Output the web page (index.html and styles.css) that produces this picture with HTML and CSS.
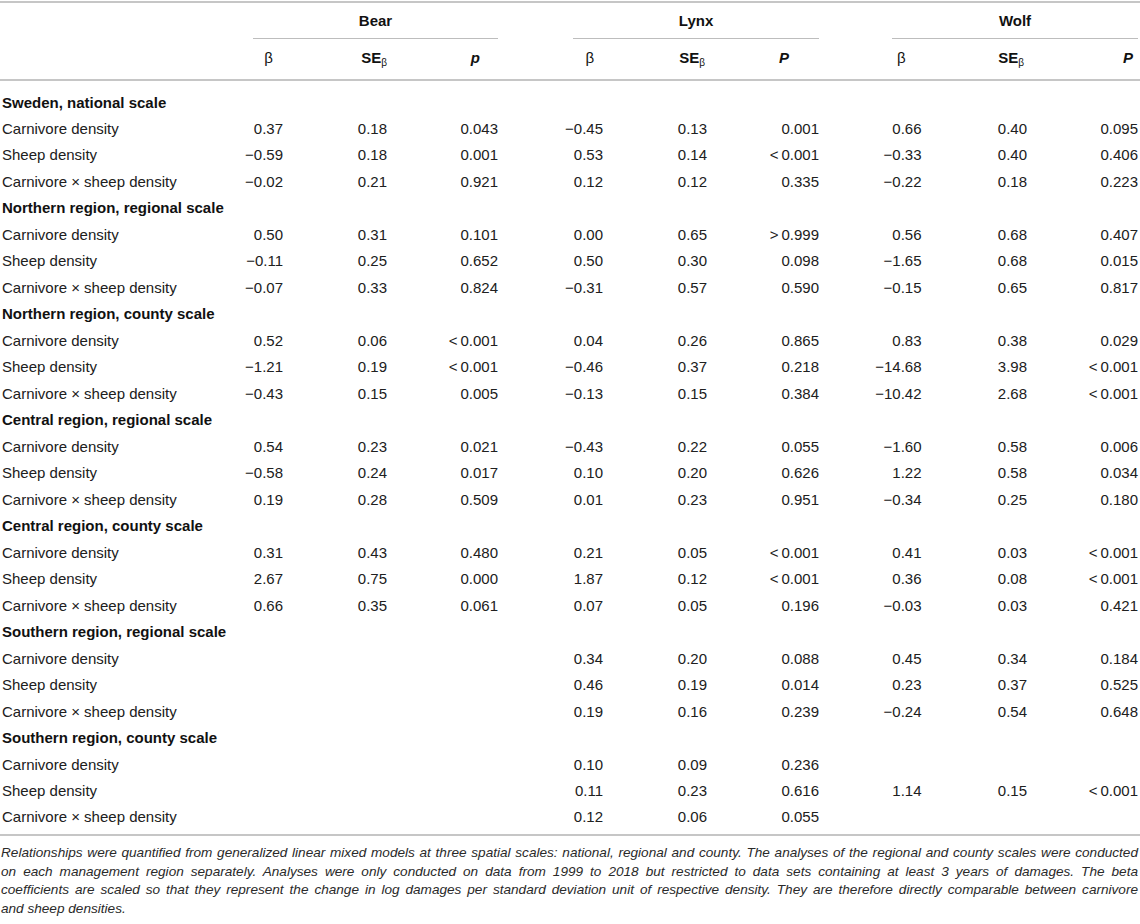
FILE: index.html
```html
<!DOCTYPE html>
<html lang="en">
<head>
<meta charset="utf-8">
<title>Relationships between carnivore and sheep density and damages</title>
<link rel="stylesheet" href="styles.css">
</head>
<body>
<div class="page">
<table class="results">
  <colgroup>
    <col class="c-label">
    <col class="c-bb"><col class="c-bs"><col class="c-bp">
    <col class="c-lb"><col class="c-ls"><col class="c-lp">
    <col class="c-wb"><col class="c-ws"><col class="c-wp">
  </colgroup>
  <thead>
    <tr class="groups">
      <th></th>
      <th colspan="3"><div class="group group-bear">Bear</div></th>
      <th colspan="3"><div class="group group-lynx">Lynx</div></th>
      <th colspan="3"><div class="group group-wolf">Wolf</div></th>
    </tr>
    <tr class="subs">
      <th></th>
      <th class="h-beta h-bear-b">β</th>
      <th class="h-se h-bear-s">SE<sub>β</sub></th>
      <th class="h-p h-bear-p">p</th>
      <th class="h-beta h-lynx-b">β</th>
      <th class="h-se h-lynx-s">SE<sub>β</sub></th>
      <th class="h-p h-lynx-p">P</th>
      <th class="h-beta h-wolf-b">β</th>
      <th class="h-se h-wolf-s">SE<sub>β</sub></th>
      <th class="h-p h-wolf-p">P</th>
    </tr>
  </thead>
  <tbody>
    <tr class="section"><th colspan="10">Sweden, national scale</th></tr>
    <tr><td>Carnivore density</td><td>0.37</td><td>0.18</td><td>0.043</td><td>−0.45</td><td>0.13</td><td>0.001</td><td>0.66</td><td>0.40</td><td>0.095</td></tr>
    <tr><td>Sheep density</td><td>−0.59</td><td>0.18</td><td>0.001</td><td>0.53</td><td>0.14</td><td>&lt;&#8201;0.001</td><td>−0.33</td><td>0.40</td><td>0.406</td></tr>
    <tr><td>Carnivore × sheep density</td><td>−0.02</td><td>0.21</td><td>0.921</td><td>0.12</td><td>0.12</td><td>0.335</td><td>−0.22</td><td>0.18</td><td>0.223</td></tr>

    <tr class="section"><th colspan="10">Northern region, regional scale</th></tr>
    <tr><td>Carnivore density</td><td>0.50</td><td>0.31</td><td>0.101</td><td>0.00</td><td>0.65</td><td>&gt;&#8201;0.999</td><td>0.56</td><td>0.68</td><td>0.407</td></tr>
    <tr><td>Sheep density</td><td>−0.11</td><td>0.25</td><td>0.652</td><td>0.50</td><td>0.30</td><td>0.098</td><td>−1.65</td><td>0.68</td><td>0.015</td></tr>
    <tr><td>Carnivore × sheep density</td><td>−0.07</td><td>0.33</td><td>0.824</td><td>−0.31</td><td>0.57</td><td>0.590</td><td>−0.15</td><td>0.65</td><td>0.817</td></tr>

    <tr class="section"><th colspan="10">Northern region, county scale</th></tr>
    <tr><td>Carnivore density</td><td>0.52</td><td>0.06</td><td>&lt;&#8201;0.001</td><td>0.04</td><td>0.26</td><td>0.865</td><td>0.83</td><td>0.38</td><td>0.029</td></tr>
    <tr><td>Sheep density</td><td>−1.21</td><td>0.19</td><td>&lt;&#8201;0.001</td><td>−0.46</td><td>0.37</td><td>0.218</td><td>−14.68</td><td>3.98</td><td>&lt;&#8201;0.001</td></tr>
    <tr><td>Carnivore × sheep density</td><td>−0.43</td><td>0.15</td><td>0.005</td><td>−0.13</td><td>0.15</td><td>0.384</td><td>−10.42</td><td>2.68</td><td>&lt;&#8201;0.001</td></tr>

    <tr class="section"><th colspan="10">Central region, regional scale</th></tr>
    <tr><td>Carnivore density</td><td>0.54</td><td>0.23</td><td>0.021</td><td>−0.43</td><td>0.22</td><td>0.055</td><td>−1.60</td><td>0.58</td><td>0.006</td></tr>
    <tr><td>Sheep density</td><td>−0.58</td><td>0.24</td><td>0.017</td><td>0.10</td><td>0.20</td><td>0.626</td><td>1.22</td><td>0.58</td><td>0.034</td></tr>
    <tr><td>Carnivore × sheep density</td><td>0.19</td><td>0.28</td><td>0.509</td><td>0.01</td><td>0.23</td><td>0.951</td><td>−0.34</td><td>0.25</td><td>0.180</td></tr>

    <tr class="section"><th colspan="10">Central region, county scale</th></tr>
    <tr><td>Carnivore density</td><td>0.31</td><td>0.43</td><td>0.480</td><td>0.21</td><td>0.05</td><td>&lt;&#8201;0.001</td><td>0.41</td><td>0.03</td><td>&lt;&#8201;0.001</td></tr>
    <tr><td>Sheep density</td><td>2.67</td><td>0.75</td><td>0.000</td><td>1.87</td><td>0.12</td><td>&lt;&#8201;0.001</td><td>0.36</td><td>0.08</td><td>&lt;&#8201;0.001</td></tr>
    <tr><td>Carnivore × sheep density</td><td>0.66</td><td>0.35</td><td>0.061</td><td>0.07</td><td>0.05</td><td>0.196</td><td>−0.03</td><td>0.03</td><td>0.421</td></tr>

    <tr class="section"><th colspan="10">Southern region, regional scale</th></tr>
    <tr><td>Carnivore density</td><td></td><td></td><td></td><td>0.34</td><td>0.20</td><td>0.088</td><td>0.45</td><td>0.34</td><td>0.184</td></tr>
    <tr><td>Sheep density</td><td></td><td></td><td></td><td>0.46</td><td>0.19</td><td>0.014</td><td>0.23</td><td>0.37</td><td>0.525</td></tr>
    <tr><td>Carnivore × sheep density</td><td></td><td></td><td></td><td>0.19</td><td>0.16</td><td>0.239</td><td>−0.24</td><td>0.54</td><td>0.648</td></tr>

    <tr class="section"><th colspan="10">Southern region, county scale</th></tr>
    <tr><td>Carnivore density</td><td></td><td></td><td></td><td>0.10</td><td>0.09</td><td>0.236</td><td></td><td></td><td></td></tr>
    <tr><td>Sheep density</td><td></td><td></td><td></td><td>0.11</td><td>0.23</td><td>0.616</td><td>1.14</td><td>0.15</td><td>&lt;&#8201;0.001</td></tr>
    <tr><td>Carnivore × sheep density</td><td></td><td></td><td></td><td>0.12</td><td>0.06</td><td>0.055</td><td></td><td></td><td></td></tr>
  </tbody>
</table>
<p class="note">
  <span class="line">Relationships were quantified from generalized linear mixed models at three spatial scales: national, regional and county. The analyses of the regional and county scales were conducted</span>
  <span class="line">on each management region separately. Analyses were only conducted on data from 1999 to 2018 but restricted to data sets containing at least 3 years of damages. The beta</span>
  <span class="line">coefficients are scaled so that they represent the change in log damages per standard deviation unit of respective density. They are therefore directly comparable between carnivore</span>
  <span class="line last">and sheep densities.</span>
</p>
</div>
</body>
</html>
```

FILE: styles.css
```css
* {
  box-sizing: border-box;
}

html, body {
  margin: 0;
  padding: 0;
  background: #ffffff;
}

body {
  font-family: "Liberation Sans", Arial, Helvetica, sans-serif;
  color: #202020;
}

.page {
  width: 1140px;
  padding-top: 1px;
}

.results {
  width: 1140px;
  table-layout: fixed;
  border-collapse: collapse;
  border-spacing: 0;
  font-size: 15px;
  border-top: 2px solid #c6c6c6;
}

.c-label { width: 200px; }
.c-bb { width: 83px; }
.c-bs { width: 104px; }
.c-bp { width: 111px; }
.c-lb { width: 105px; }
.c-ls { width: 104px; }
.c-lp { width: 112px; }
.c-wb { width: 102.5px; }
.c-ws { width: 105.5px; }
.c-wp { width: 113px; }

.results th,
.results td {
  padding: 0;
  font-weight: normal;
  line-height: 17px;
}

/* group header row */
.groups th {
  padding-top: 9px;
  vertical-align: bottom;
}

.group {
  text-align: center;
  font-weight: bold;
  color: #111;
  padding-bottom: 9px;
  border-bottom: 1px solid #bdbdbd;
}

.group-bear { margin-left: 53px; }
.group-lynx { margin-left: 75px; }
.group-wolf { margin-left: 73px; margin-right: 2px; }

/* sub header row */
.results .subs th {
  padding-top: 10px;
  padding-bottom: 13px;
  text-align: right;
  color: #111;
  border-bottom: 2px solid #c6c6c6;
}

.results .subs .h-se,
.results .subs .h-p {
  font-weight: bold;
}

.results .subs .h-p {
  font-style: italic;
}

.h-se sub {
  font-size: 10px;
  font-weight: normal;
  line-height: 0;
  vertical-align: -3px;
}

.results .subs .h-bear-b { padding-right: 10px; }
.results .subs .h-lynx-b { padding-right: 9px; }
.results .subs .h-wolf-b { padding-right: 16px; }
.results .subs .h-bear-s { padding-right: 0; }
.results .subs .h-lynx-s { padding-right: 2px; }
.results .subs .h-wolf-s { padding-right: 3px; }
.results .subs .h-bear-p { padding-right: 18px; }
.results .subs .h-lynx-p { padding-right: 30px; }
.results .subs .h-wolf-p { padding-right: 7px; }

/* body rows */
.results tbody tr {
  height: 26.5px;
}

.results tbody td {
  text-align: right;
  vertical-align: middle;
  white-space: nowrap;
}

.results tbody td:first-child {
  text-align: left;
  padding-left: 2px;
}

.results tbody td:last-child {
  padding-right: 2px;
}

.results .section th {
  text-align: left;
  font-weight: bold;
  color: #111;
  padding-left: 2px;
  vertical-align: middle;
}

.results tbody tr:first-child > * {
  padding-top: 8.5px;
}

.results tbody tr:first-child {
  height: 35px;
}

.results tbody tr:last-child > * {
  padding-bottom: 4.5px;
}

.results tbody tr:last-child {
  height: 31px;
}

.results tbody {
  border-bottom: 2px solid #c6c6c6;
}

/* footnote */
.note {
  margin: 8px 0 0;
  padding: 0 2px 0 1px;
  font-size: 13.6px;
  font-style: italic;
  line-height: 18.5px;
  color: #2a2a2a;
}

.note .line {
  display: block;
  text-align: justify;
  text-align-last: justify;
  white-space: nowrap;
}

.note .line.last {
  text-align-last: left;
}
```
